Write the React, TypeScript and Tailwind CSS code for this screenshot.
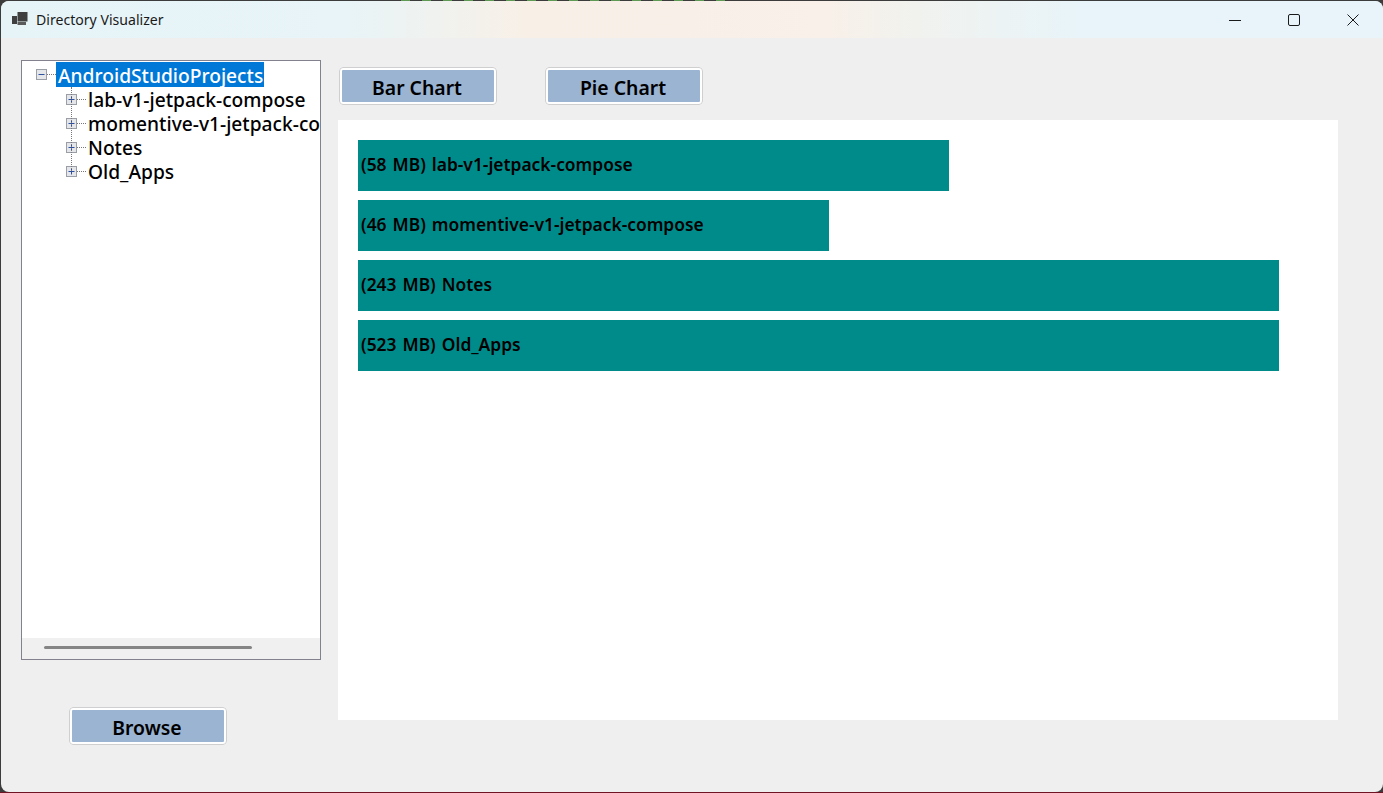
const font = "font-['Noto_Sans','Open_Sans',sans-serif]";

const bars = [
  { label: "(58 MB) lab-v1-jetpack-compose", width: 591 },
  { label: "(46 MB) momentive-v1-jetpack-compose", width: 471 },
  { label: "(243 MB) Notes", width: 921 },
  { label: "(523 MB) Old_Apps", width: 921 },
];

const folders = ["lab-v1-jetpack-compose", "momentive-v1-jetpack-compose", "Notes", "Old_Apps"];

const AppIcon = () => (
  <svg width="16" height="16" viewBox="0 0 16 16" className="shrink-0">
    <rect x="0" y="5" width="5" height="8" fill="#3f3f3f" />
    <rect x="5.5" y="1" width="10" height="9.5" fill="#3f3f3f" />
    <rect x="5.5" y="11" width="8.5" height="3" fill="#5a5a5a" />
  </svg>
);

const WindowButtons = () => (
  <div className="flex items-center">
    <div className="w-[59px] flex justify-center">
      <svg width="12" height="12" viewBox="0 0 12 12">
        <path d="M0 6.5H12" stroke="#1a1a1a" strokeWidth="1" />
      </svg>
    </div>
    <div className="w-[59px] flex justify-center">
      <svg width="12" height="12" viewBox="0 0 12 12">
        <rect x="0.5" y="0.5" width="11" height="11" rx="1.5" fill="none" stroke="#1a1a1a" strokeWidth="1" />
      </svg>
    </div>
    <div className="w-[60px] flex justify-center">
      <svg width="12" height="12" viewBox="0 0 12 12">
        <path d="M0.5 0.5L11.5 11.5M11.5 0.5L0.5 11.5" stroke="#1a1a1a" strokeWidth="1" />
      </svg>
    </div>
  </div>
);

const Expander = ({ open }: { open?: boolean }) => (
  <svg width="11" height="11" viewBox="0 0 11 11" className="shrink-0">
    <rect x="0.5" y="0.5" width="10" height="10" fill="#e4e6ea" stroke="#9a9ea6" />
    <path d="M2.5 5.5H8.5" stroke="#2f4f9f" />
    {!open && <path d="M5.5 2.5V8.5" stroke="#2f4f9f" />}
  </svg>
);

const ActionButton = ({ label }: { label: string }) => (
  <button className="w-[158px] h-[38px] rounded-[4px] border-[3px] border-white outline outline-1 -outline-offset-1 outline-[#cfcfcf] bg-[#9ab4d2] pr-[2px] text-[19.4px] font-semibold text-black leading-none">
    <span className="relative top-[2px]">{label}</span>
  </button>
);

export default function App() {
  return (
    <div className={`${font} w-[1383px] h-[793px] overflow-hidden bg-[#6e1423] flex flex-col`}>
      <div className="h-[792px] bg-[#3c3c3c] pl-px">
        <div className="h-px">
          {/* wallpaper showing through above the title bar */}
          <div className="ml-[400px] w-[332px] h-px bg-[repeating-linear-gradient(90deg,#5f9a55_0px,#5f9a55_9px,#3c3c3c_9px,#3c3c3c_21px)]" />
        </div>
        <div className="h-[791px] rounded-[8px] overflow-hidden bg-[#efefef] flex flex-col">
          <div className="h-[37px] shrink-0 flex items-center justify-between bg-[linear-gradient(90deg,#e6f4f8_0%,#e8f4f7_25%,#f8f0e7_38%,#f8f0e9_60%,#f1f2ee_66%,#e8f4f9_78%,#e8f4f9_100%)] pl-[11px]">
            <div className="flex items-center gap-[8px] text-[14.1px] text-[#1a1a1a]">
              <AppIcon />
              <span>Directory Visualizer</span>
            </div>
            <WindowButtons />
          </div>

          <div className="flex flex-1 pt-[22px] pl-[20px]">
            <div className="w-[300px] shrink-0 flex flex-col">
              <div className="relative h-[600px] border border-[#82828f] bg-white flex flex-col overflow-hidden">
                <div className="flex-1 pt-px text-[19.2px] font-medium leading-[22px] text-black whitespace-nowrap">
                  <div className="flex items-center h-[25px] pl-[14px]">
                    <Expander open />
                    <div className="w-[9px] shrink-0 border-t border-dotted border-[#777]" />
                    <span className="bg-[#0078d7] text-white w-[208px] h-[25px] pl-[2px] pt-[2px] flex items-center">AndroidStudioProjects</span>
                  </div>
                  {folders.map((name) => (
                    <div key={name} className="flex items-center h-[24px] pl-[44px]">
                      <Expander />
                      <div className="w-[9px] shrink-0 border-t border-dotted border-[#777]" />
                      <span className="pl-[2px] pt-[2px]">{name}</span>
                    </div>
                  ))}
                </div>
                <div className="absolute left-[49px] top-[26px] h-[84px] border-l border-dotted border-[#777]" />
                <div className="h-[21px] shrink-0 bg-[#f0f0f0] pl-[22px] pt-[8px]">
                  <div className="w-[208px] h-[3px] rounded-full bg-[#858585]" />
                </div>
              </div>
              <div className="pl-[48px] pt-[47px]">
                <ActionButton label="Browse" />
              </div>
            </div>

            <div className="w-[1000px] ml-[17px] shrink-0">
              <div className="flex gap-[48px] pl-px pt-[7px]">
                <ActionButton label="Bar Chart" />
                <ActionButton label="Pie Chart" />
              </div>
              <div className="mt-[15px] h-[600px] bg-white pl-[20px] pt-[20px] flex flex-col gap-[9px]">
                {bars.map((bar) => (
                  <div
                    key={bar.label}
                    className="h-[51px] bg-[#008b8b] flex items-center pl-[3px] pb-[2px] text-[17.4px] [word-spacing:1.5px] font-semibold text-black whitespace-nowrap"
                    style={{ width: bar.width }}
                  >
                    {bar.label}
                  </div>
                ))}
              </div>
            </div>
          </div>
        </div>
      </div>
    </div>
  );
}
